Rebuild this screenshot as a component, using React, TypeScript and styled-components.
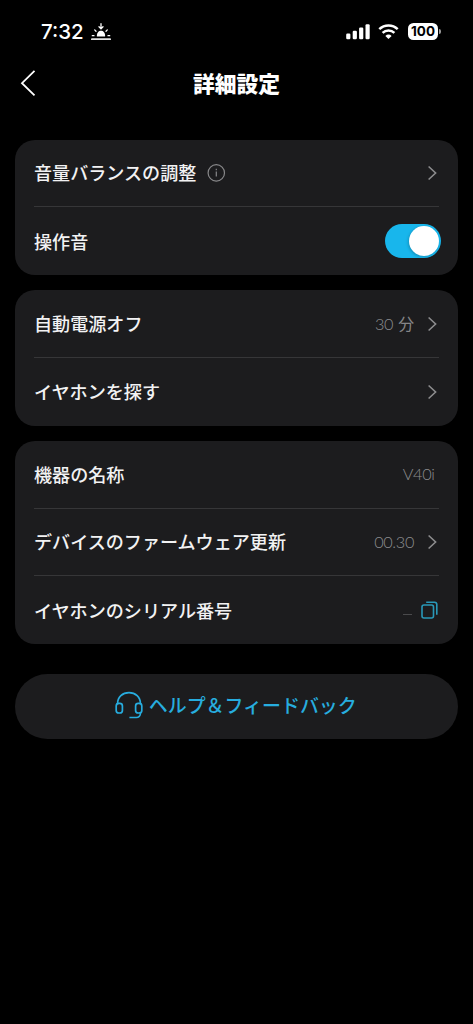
import React from 'react';
import styled, { createGlobalStyle } from 'styled-components';

const GlobalStyle = createGlobalStyle`
  * { box-sizing: border-box; }
  body {
    margin: 0;
    background: #000;
    color: #f2f2f3;
    font-family: "Noto Sans CJK JP", sans-serif;
  }
  svg { display: block; flex: none; }
  button { background: none; border: 0; padding: 0; color: inherit; font: inherit; }
`;

const Screen = styled.div`
  width: 100%;
  min-height: 1024px;
  background: #000;
  display: flex;
  flex-direction: column;
`;

const StatusBar = styled.div`
  height: 62px;
  padding: 1px 32px 0 41px;
  display: flex;
  align-items: center;
  justify-content: space-between;
`;

const StatusGroup = styled.div`
  display: flex;
  align-items: center;
  gap: 7px;
`;

const Clock = styled.span`
  font: 500 20.5px/24px Inter, sans-serif;
  letter-spacing: 0;
  color: #fff;
`;

const Battery = styled.div`
  display: flex;
  align-items: center;
  gap: 1px;
  margin-left: 2px;
`;

const BatteryBody = styled.span`
  width: 30px;
  height: 17px;
  border-radius: 5.5px;
  background: #fff;
  color: #000;
  text-align: center;
  font: 700 13.5px/17px Inter, sans-serif;
`;

const BatteryCap = styled.span`
  width: 2px;
  height: 5px;
  border-radius: 0 2px 2px 0;
  background: #999;
`;

const Header = styled.header`
  height: 42px;
  padding: 0 20px;
  display: grid;
  grid-template-columns: 40px 1fr 40px;
  align-items: center;
`;

const Title = styled.h1`
  margin: 0;
  padding-bottom: 1px;
  text-align: center;
  color: #fff;
  font-size: 21.8px;
  line-height: 30px;
  font-weight: 900;
`;

const Content = styled.main`
  padding: 35.6px 15px 0;
  display: flex;
  flex-direction: column;
  gap: 15px;
`;

const Card = styled.section`
  padding: 0 19px;
  border-radius: 20px;
  background: #1c1c1e;
`;

const Row = styled.div`
  height: 67.8px;
  display: flex;
  align-items: center;
  justify-content: space-between;

  &:not(:last-child) { border-bottom: 1px solid #363638; }
`;

const Label = styled.span`
  display: flex;
  align-items: center;
  gap: 10px;
  padding-bottom: 1px;
  font-size: 18.08px;
  line-height: 26px;
  font-weight: 500;
  white-space: nowrap;
`;

const Trailing = styled.span<{ $inset?: number }>`
  display: flex;
  align-items: center;
  gap: 13px;
  padding-right: ${(p) => p.$inset ?? 2}px;
`;

const Value = styled.span`
  display: flex;
  align-items: baseline;
  gap: 5px;
  color: #8c8c8f;
  font: 300 16.3px/24px Lato, sans-serif;
  letter-spacing: -0.35px;
`;

const Unit = styled.span`
  color: #858588;
  font: 400 15.8px/24px "Noto Sans CJK JP", sans-serif;
  letter-spacing: 0;
`;

const EmptyValue = styled.span`
  width: 9px;
  height: 1px;
  margin-top: 8px;
  margin-right: -4px;
  background: #4a4a4c;
`;

const Toggle = styled.button`
  width: 56px;
  height: 33.6px;
  margin-right: -1.5px;
  padding: 1.8px;
  border-radius: 17px;
  background: #18b6ec;
  display: flex;
  justify-content: flex-end;
`;

const Knob = styled.span`
  width: 30px;
  height: 30px;
  border-radius: 50%;
  background: #fff;
  box-shadow: -1px 1px 3px rgba(0, 0, 0, 0.2);
`;

const HelpButton = styled.button`
  height: 65.4px;
  margin-top: 14.6px;
  padding: 0 1.5px 2px 0;
  border-radius: 33px;
  background: #1c1c1e;
  color: #27addf;
  display: flex;
  align-items: center;
  justify-content: center;
  gap: 6px;
  font-size: 18.95px;
  font-weight: 500;
  line-height: 28px;
`;

const Chevron = () => (
  <svg width="10" height="16" viewBox="0 0 10 16" fill="none" stroke="#8c8c8e" strokeWidth="1.6">
    <path d="M1.6 1.5 8.6 8l-7 6.5" />
  </svg>
);

const BackIcon = () => (
  <svg width="16" height="28" viewBox="0 0 16 28" fill="none" stroke="#fff" strokeWidth="1.8">
    <path d="M14.5 1.8 2 14.2l12.5 12.2" />
  </svg>
);

const InfoIcon = () => (
  <svg width="20" height="20" viewBox="0 0 20 20" fill="none" stroke="#88888a" strokeWidth="1.2">
    <circle cx="10.3" cy="10.9" r="8.2" />
    <path d="M10.3 9.6v5M10.3 6.7v1.5" />
  </svg>
);

const CopyIcon = () => (
  <svg width="17" height="18" viewBox="0 0 17 18" fill="none" stroke="#2998b8" strokeWidth="1.6">
    <rect x="1" y="4" width="11.5" height="13" rx="2" />
    <path d="M5.2 1.2h8.3a2.3 2.3 0 0 1 2.3 2.3v10.3" />
  </svg>
);

const HeadsetIcon = () => (
  <svg width="28" height="28" viewBox="0 0 28 28" fill="none" stroke="currentColor" strokeWidth="1.7">
    <path d="M2.6 13.2v-.8C2.6 6 7.5 1.6 14 1.6S25.4 6 25.4 12.4v.8" />
    <rect x="1.2" y="12.4" width="6.2" height="9.6" rx="2.6" />
    <rect x="20.6" y="12.4" width="6.2" height="9.6" rx="2.6" />
    <path d="M25.4 21v1.5a4 4 0 0 1-4 4h-7" />
  </svg>
);

const SunsetIcon = () => (
  <svg width="20" height="18" viewBox="0 0 20 18" fill="none" stroke="#fff" strokeWidth="1.3" strokeLinecap="round">
    <path d="M10 .7v5M8 3.8l2 2 2-2" />
    <path d="M3.7 6.9l1.3 1.3M16.3 6.9 15 8.2M1.3 12.7H3M17 12.7h1.7" />
    <path d="M5.9 13.6c-.6-7.8 8.8-7.8 8.2 0z" fill="#fff" stroke="none" />
    <path d="M.8 16.2h18.4" stroke="#e2e2e2" strokeWidth="1.8" />
  </svg>
);

const SignalIcon = () => (
  <svg width="25" height="16" viewBox="0 0 25 16" fill="#fff">
    <rect x="0.2" y="9.5" width="4.2" height="5.7" rx="1.2" />
    <rect x="6.7" y="6.7" width="4.2" height="8.5" rx="1.2" />
    <rect x="13.1" y="3.6" width="4.2" height="11.6" rx="1.2" />
    <rect x="19.5" y="0.2" width="4.2" height="15" rx="1.2" />
  </svg>
);

const WifiIcon = () => (
  <svg width="21" height="16" viewBox="0 0 21 16" fill="none" stroke="#fff" strokeWidth="2.5">
    <path d="M1.3 5.2a13.2 13.2 0 0 1 18.4 0" />
    <path d="M4.6 8.8a8.5 8.5 0 0 1 11.8 0" />
    <path d="M10.5 15.1 7.4 11.9a4.4 4.4 0 0 1 6.2 0z" fill="#fff" stroke="none" />
  </svg>
);

export default function App() {
  return (
    <Screen>
      <GlobalStyle />
      <StatusBar>
        <StatusGroup>
          <Clock>7:32</Clock>
          <SunsetIcon />
        </StatusGroup>
        <StatusGroup>
          <SignalIcon />
          <WifiIcon />
          <Battery>
            <BatteryBody>100</BatteryBody>
            <BatteryCap />
          </Battery>
        </StatusGroup>
      </StatusBar>
      <Header>
        <BackIcon />
        <Title>詳細設定</Title>
      </Header>
      <Content>
        <Card>
          <Row>
            <Label>
              音量バランスの調整
              <InfoIcon />
            </Label>
            <Trailing><Chevron /></Trailing>
          </Row>
          <Row>
            <Label>操作音</Label>
            <Toggle role="switch" aria-checked="true"><Knob /></Toggle>
          </Row>
        </Card>
        <Card>
          <Row>
            <Label>自動電源オフ</Label>
            <Trailing>
              <Value>30 <Unit>分</Unit></Value>
              <Chevron />
            </Trailing>
          </Row>
          <Row>
            <Label>イヤホンを探す</Label>
            <Trailing><Chevron /></Trailing>
          </Row>
        </Card>
        <Card>
          <Row>
            <Label>機器の名称</Label>
            <Trailing $inset={4.5}><Value>V40i</Value></Trailing>
          </Row>
          <Row>
            <Label>デバイスのファームウェア更新</Label>
            <Trailing>
              <Value>00.30</Value>
              <Chevron />
            </Trailing>
          </Row>
          <Row>
            <Label>イヤホンのシリアル番号</Label>
            <Trailing $inset={0.6}>
              <EmptyValue />
              <CopyIcon />
            </Trailing>
          </Row>
        </Card>
        <HelpButton>
          <HeadsetIcon />
          ヘルプ＆フィードバック
        </HelpButton>
      </Content>
    </Screen>
  );
}
